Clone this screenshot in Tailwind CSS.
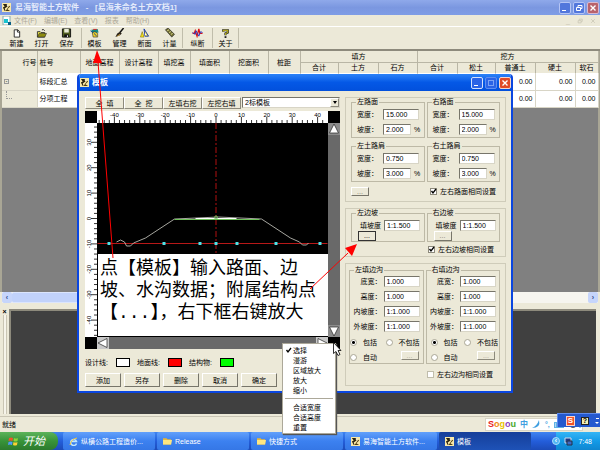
<!DOCTYPE html>
<html lang="zh-CN">
<head>
    <meta charset="UTF-8">
    <meta name="viewport" content="width=device-width, initial-scale=1">
    <title>易海智能土方软件</title>
    <script src="https://cdn.jsdelivr.net/npm/@tailwindcss/browser@4"></script>
</head>
<body class="relative h-screen overflow-hidden flex flex-col bg-[#ece9d8] text-black text-[7px] leading-[9px] font-['Liberation_Sans','Noto_Sans_CJK_SC',sans-serif] select-none">

<!-- shared icons -->
<svg class="hidden">
    <symbol id="app" viewBox="0 0 10 10">
        <rect width="10" height="10" fill="#f8e8a8"/>
        <path d="M1 1l2 3-2 1 2 4h1L3 6l3-2V1z" fill="#2b2410"/>
        <path d="M4 9l4-6 1 1-3 3 3 2z" fill="#4d3c12"/>
        <path d="M5 2l2-1-1 3z" fill="#fff"/>
    </symbol>
    <symbol id="folder" viewBox="0 0 10 8">
        <path d="M0 1h4l1 1h4v6H0z" fill="#e8b83a"/>
        <path d="M0 8V3h10L9 8z" fill="#ffe680"/>
    </symbol>
    <symbol id="tick" viewBox="0 0 7 7">
        <path d="M1.5 3l1.5 2 3-4" fill="none" stroke="#000" stroke-width="1.3"/>
    </symbol>
</svg>

<!-- main window title -->
<header class="flex items-center h-[15px] shrink-0 pl-0.5 pr-px gap-1 bg-linear-to-b from-[#8fa9ea] via-[#7b97e0] to-[#7f9de6] text-[#e4ebfb]">
    <svg class="size-[9px]"><use href="#app"/></svg>
    <h1 class="text-[8px] font-bold grow whitespace-pre">易海智能土方软件   -   [易海未命名土方文档1]</h1>
    <div class="flex gap-0.5">
        <button aria-label="最小化" class="size-3 rounded-xs border border-[#b5c5f5] bg-[#5277dc] flex items-end p-0.5"><span class="w-1 h-px bg-white"></span></button>
        <button aria-label="还原" class="size-3 rounded-xs border border-[#b5c5f5] bg-[#5277dc] grid place-items-center">
            <svg class="size-2" viewBox="0 0 8 8" fill="none" stroke="#fff"><path d="M3 3V1.500h4v3H5.500M1.500 3.500h4v3h-4z"/></svg>
        </button>
        <button aria-label="关闭" class="size-3 rounded-xs border border-[#d9b9cf] bg-[#b9636c] grid place-items-center">
            <svg class="size-2" viewBox="0 0 8 8" stroke="#fff" stroke-width="1.400"><path d="M1.500 1.500l5 5M6.500 1.500l-5 5"/></svg>
        </button>
    </div>
</header>

<!-- menu -->
<nav class="flex items-center h-3 shrink-0 pl-0.5 pr-1 gap-[7px] border-b border-white text-[#aca899]">
    <svg class="size-[9px] -mr-1" viewBox="0 0 9 9"><rect x="1" width="7" height="9" fill="#fff" stroke="#8aa"/><path d="M2 3h4v4H2z" fill="#1bc3cf"/><path d="M6 6h3v3H6z" fill="#0b5f86"/></svg>
    <button>文件(F)</button>
    <button>编辑(E)</button>
    <button>查看(V)</button>
    <button>报表</button>
    <button class="mr-auto">帮助(H)</button>
    <span class="text-[#c9c5b4]">_</span>
    <svg class="size-[6px]" viewBox="0 0 8 8" fill="none" stroke="#c9c5b4"><path d="M3 3V1.500h4v3H5.500M1.500 3.500h4v3h-4z"/></svg>
    <svg class="size-[6px]" viewBox="0 0 8 8" stroke="#c9c5b4"><path d="M1.500 1.500l5 5M6.500 1.500l-5 5"/></svg>
</nav>

<!-- toolbar -->
<div class="flex h-6 shrink-0 pl-1 py-px border-b-2 border-[#8d8a7c]">
    <button class="w-[25px] flex flex-col items-center gap-px">
        <svg class="size-[11px]" viewBox="0 0 11 11"><path d="M3 2h4l2 2v6H3z" fill="#fff" stroke="#222"/><path d="M6.500 2v2.500H9" fill="none" stroke="#222"/></svg>新建
    </button>
    <button class="w-[25px] flex flex-col items-center gap-px">
        <svg class="size-[11px]" viewBox="0 0 11 11"><path d="M1 4h3l1 1h4v5H1z" fill="#e9e04a" stroke="#333"/><path d="M1 10l2-4h8L9 10z" fill="#8d8b10" stroke="#222" stroke-width=".6"/><path d="M6 2q2-1 3 1" fill="none" stroke="#222"/></svg>打开
    </button>
    <button class="w-[25px] flex flex-col items-center gap-px">
        <svg class="size-[11px]" viewBox="0 0 11 11"><path d="M1 1h9v9H1z" fill="#4f5d1d" stroke="#111"/><path d="M3 1h5v4H3z" fill="#e9ecd8"/><path d="M3 7h5v3H3z" fill="#111"/><path d="M6 8h1v2H6z" fill="#fff"/></svg>保存
    </button>
    <div class="w-[3px] border-r border-[#c0bdab]"></div>
    <button class="w-[25px] flex flex-col items-center gap-px">
        <svg class="size-[11px]" viewBox="0 0 11 11"><path d="M2 2l7-1 1 4-7 1z" fill="#148a86"/><path d="M4 1h4v1H4z" fill="#d22"/><path d="M3 5l3-1 3 2v4H4z" fill="#f0d12c" stroke="#222" stroke-width=".6"/><path d="M5 6l3 3M1 3l3 2" stroke="#123e8c"/></svg>模板
    </button>
    <button class="w-[25px] flex flex-col items-center gap-px">
        <svg class="size-[11px]" viewBox="0 0 11 11"><path d="M10 0L6 5" stroke="#111" stroke-width="1.600"/><path d="M6 4l2 2-2 2-5 2 2-4z" fill="#2b2418"/><path d="M3 9l3-2" stroke="#d2a33a"/></svg>管理
    </button>
    <button class="w-[25px] flex flex-col items-center gap-px">
        <svg class="size-[11px]" viewBox="0 0 11 11"><path d="M1 10l2-6 2 6z" fill="#f4e21e" stroke="#776a00" stroke-width=".6"/><path d="M5 1l5 8H6z" fill="#f4e21e" stroke="#1433b0"/><path d="M6 5l2 3H6z" fill="#fff"/></svg>断面
    </button>
    <button class="w-[25px] flex flex-col items-center gap-px">
        <svg class="size-[11px]" viewBox="0 0 11 11"><path d="M1 2l3-2 7 7-3 3z" fill="#6e6b2f" stroke="#222" stroke-width=".7"/><path d="M3 3l2-1M5 5l2-1M7 7l2-1" stroke="#e9e6a0"/></svg>计量
    </button>
    <div class="w-px bg-[#c0bdab]"></div>
    <button class="w-[29px] flex flex-col items-center gap-px">
        <svg class="size-[11px]" viewBox="0 0 11 11" fill="none"><path d="M0 6h2l1-3 2 6 2-8 1 5h3" stroke="#d11" stroke-width="1.400"/><path d="M0 5l3 2 1-4 3 6 2-5 2 1" stroke="#2335c8"/></svg>纵断
    </button>
    <div class="w-px bg-[#c0bdab]"></div>
    <button class="w-[25px] flex flex-col items-center gap-px">
        <svg class="size-[11px]" viewBox="0 0 11 11" fill="none"><path d="M3 4V2.500h5V5L5.500 6v2" stroke="#222" stroke-width="2.400"/><path d="M3 4V2.500h5V5L5.500 6v1.500" stroke="#e6d81c"/><path d="M4.500 9h2v2h-2z" fill="#222"/></svg>关于
    </button>
    <div class="w-px bg-[#c0bdab]"></div>
</div>

<!-- quantity table -->
<main class="h-[241px] shrink-0 border-l-2 border-r-2 border-[#a9a695] bg-[#808080]">
    <table class="w-full table-fixed border-collapse">
        <colgroup>
            <col class="w-[35px]"><col class="w-[43px]"><col class="w-[39px]"><col class="w-[39px]"><col class="w-[32px]"><col class="w-[39px]"><col class="w-[39px]"><col class="w-[32px]">
            <col class="w-[38px]"><col class="w-[40px]"><col class="w-[39px]"><col class="w-[40px]"><col class="w-[38px]"><col class="w-[40px]"><col class="w-[40px]"><col class="w-[23px]">
        </colgroup>
        <thead class="bg-[#ece9d8] [&_th]:font-normal [&_th]:border-r [&_th]:border-[#b9b6a5] [&_th]:p-0">
            <tr class="h-[11px]">
                <th rowspan="2" class="text-right">行号</th>
                <th rowspan="2" class="text-left"><span class="pl-0.5">桩号</span></th>
                <th rowspan="2">地面高程</th>
                <th rowspan="2">设计高程</th>
                <th rowspan="2">填挖高</th>
                <th rowspan="2">填面积</th>
                <th rowspan="2">挖面积</th>
                <th rowspan="2">桩距</th>
                <th colspan="3" class="border-b">填方</th>
                <th colspan="5" class="border-b">挖方</th>
            </tr>
            <tr class="h-[11px]">
                <th>合计</th><th>土方</th><th>石方</th>
                <th>合计</th><th>松土</th><th>普通土</th><th>硬土</th><th>软石</th>
            </tr>
        </thead>
        <tbody class="bg-white text-right [&_td]:border-r [&_td]:border-b [&_td]:border-[#d8d5c6] [&_td]:p-0 [&_td]:pr-0.5">
            <tr class="h-[17px]">
                <td class="bg-[#ece9d8]"><span class="block size-[5px] ml-0.5 border border-[#999] text-[6px] leading-[3px] text-center">-</span></td>
                <td class="text-left"><span class="pl-0.5">标段汇总</span></td><td></td><td></td><td></td><td></td><td></td><td></td><td></td><td></td><td></td><td></td><td></td>
                <td>0.00</td><td>0.00</td><td>0.00</td>
            </tr>
            <tr class="h-[17px]">
                <td class="bg-[#ece9d8]"><span class="block w-1.5 h-2 ml-1 -mt-2 border-l border-b border-dotted border-[#999]"></span></td>
                <td class="text-left"><span class="pl-0.5">分项工程</span></td><td></td><td></td><td></td><td></td><td></td><td></td><td></td><td></td><td></td><td></td><td></td>
                <td>0.00</td><td>0.00</td><td>0.00</td>
            </tr>
        </tbody>
    </table>
</main>

<div class="flex h-[11px] shrink-0 mx-0.5 bg-[#f6f5ef]">
    <button aria-label="向左" class="w-2.5 rounded-xs bg-[#c6d5fb] text-[#2d4a8c] font-bold">‹</button>
    <div class="w-3/4 rounded-xs bg-[#c1d2fb] border-y border-[#dbe5fd]"></div>
    <button aria-label="向右" class="w-2.5 ml-auto rounded-xs bg-[#c6d5fb] text-[#2d4a8c] font-bold">›</button>
</div>

<!-- docked panel -->
<section class="flex grow min-h-0 pt-1.5 pr-1">
    <div class="w-[11px] flex flex-col items-center border-r-2 border-[#8d8a7c]">
        <button aria-label="关闭面板" class="font-bold leading-[6px]">×</button>
        <div class="w-1 grow border-x border-x-[#c9c5b4] bg-[#f6f4ea]"></div>
    </div>
    <div class="grow border-t-2 border-[#8d8a7c] bg-[#404040]"></div>
</section>

<footer class="flex items-center h-4 shrink-0 mt-0.5 px-0.5 border-t border-[#c9c5b4]">就绪</footer>

<!-- taskbar -->
<div class="flex items-stretch h-[18px] shrink-0 gap-0.5 bg-linear-to-b from-[#3f84f0] via-[#245edb] to-[#1c4bb8] text-white">
    <button class="flex items-center w-[58px] gap-1 pl-2 mr-[3px] rounded-r-lg bg-linear-to-b from-[#5cb35a] via-[#389439] to-[#2c7a2d] text-[11px] italic">
        <svg class="size-[11px]" viewBox="0 0 11 11"><path d="M1 2q2-1 4 0L4.500 5q-2-1-4 0z" fill="#f0542a"/><path d="M6 2q2 1 4 0l-.5 3q-2 1-4 0z" fill="#8cd438"/><path d="M.5 6q2-1 4 0L4 9q-2-1-4 0z" fill="#4f9bf7"/><path d="M5.500 6q2 1 4 0L9 9q-2 1-4 0z" fill="#fbd233"/></svg>开始
    </button>
    <button class="flex items-center w-[92px] gap-[3px] pl-1.5 rounded-xs bg-linear-to-b from-[#62a0fb] via-[#3c81f0] to-[#3577e6]">
        <svg class="size-[9px]" viewBox="0 0 9 9" fill="none"><path d="M7.500 6.500A3 3 0 1 1 7.500 4.500H3" stroke="#bfe6ff" stroke-width="1.500"/><path d="M1 8Q2 2 8 1" stroke="#f4c83c"/></svg>纵横公路工程造价...
    </button>
    <button class="flex items-center w-[92px] gap-[3px] pl-1.5 rounded-xs bg-linear-to-b from-[#62a0fb] via-[#3c81f0] to-[#3577e6]">
        <svg class="w-[9px] h-2"><use href="#folder"/></svg>Release
    </button>
    <button class="flex items-center w-[92px] gap-[3px] pl-1.5 rounded-xs bg-linear-to-b from-[#62a0fb] via-[#3c81f0] to-[#3577e6]">
        <svg class="w-[9px] h-2"><use href="#folder"/></svg>快捷方式
    </button>
    <button class="flex items-center w-[92px] gap-[3px] pl-1.5 rounded-xs bg-linear-to-b from-[#62a0fb] via-[#3c81f0] to-[#3577e6]">
        <svg class="size-[9px]"><use href="#app"/></svg>易海智能土方软件...
    </button>
    <button class="flex items-center w-[92px] gap-[3px] pl-1.5 rounded-xs bg-linear-to-b from-[#163f9a] to-[#1e52b7]">
        <svg class="size-[9px]"><use href="#app"/></svg>模板
    </button>
    <div class="flex items-center ml-auto w-11 gap-1 pr-2 bg-linear-to-b from-[#35b5f5] via-[#129be8] to-[#0f86d0]">
        <span class="size-2 -ml-1 rounded-full bg-[#4fb4f3] border border-[#a9dcfb] leading-[5px] text-center font-bold">‹</span>
        <svg class="size-[9px]" viewBox="0 0 9 9"><path d="M1 1h6v5H1z" fill="#203a8a" stroke="#cde"/><path d="M3 4h5v4H3z" fill="#3e67c4" stroke="#234"/></svg>
        <time class="ml-auto">7:48</time>
    </div>
</div>

<!-- input method bars -->
<div class="absolute right-[17px] bottom-[19px] flex items-center w-[98px] h-[13px] pl-0.5 gap-1 bg-white border border-[#d8d5c6] text-[#3f9fe0]">
    <b class="text-[9px]"><span class="text-[#e8241c]">S</span><span class="text-[#f08a10]">o</span><span class="text-[#e8c400]">g</span><span class="text-[#8b3fc0]">o</span><span class="text-[#48a82c]">u</span></b>
    <b class="text-[8px]">中</b>
    <svg class="size-[9px] shrink-0" viewBox="0 0 9 9"><path d="M7 0Q9 8 0 8q5-2 7-8z" fill="#3f9fe0"/></svg>
    <b>°,</b>
    <svg class="w-2.5 h-2 shrink-0" viewBox="0 0 10 8"><path d="M0 1h10v6H0z" fill="#5fb1e6"/><path d="M1 3h8M1 5h8" stroke="#fff" stroke-dasharray="1 1"/></svg>
    <svg class="w-[18px] h-2 shrink-0" viewBox="0 0 18 8"><circle cx="5" cy="4" r="3" fill="#555"/><path d="M12 1v6M10 3h5" stroke="#3f9fe0"/></svg>
</div>
<div class="absolute right-0 bottom-[23px] flex items-center w-[43px] h-3.5 pl-2 gap-1.5 bg-[#2459cf] border-t border-l border-[#5f8cec] text-white">
    <b class="w-[9px] h-2.5 bg-[#f0522a] border border-[#fbd5c8] text-[8px] leading-2 text-center">S</b>
    <b class="w-2 h-2 bg-[#f4eeb4] border border-[#222] leading-[6px] text-black text-center">?</b>
    <svg class="w-1 h-2" viewBox="0 0 4 8"><path d="M1 1h3v1H1zM0 5h4L2 7z" fill="#fff"/></svg>
</div>

<!-- template dialog -->
<div role="dialog" aria-labelledby="dlg-title" class="absolute left-[77px] top-[74px] w-[436px] h-[319px] flex flex-col rounded-t-[4px] border-2 border-t-0 border-[#0a46e0] bg-[#ece9d8] overflow-hidden">
    <div class="flex items-center h-[17px] shrink-0 gap-[3px] pl-px bg-linear-to-b from-[#2b82f8] via-[#0458e6] to-[#0250dc] text-white">
        <svg class="size-[9px]"><use href="#app"/></svg>
        <h2 id="dlg-title" class="text-[8px] font-bold grow">模板</h2>
        <div class="flex gap-0.5">
            <button aria-label="最小化" class="size-3 rounded-xs border border-[#d4e0fb] bg-[#2a63e6] flex items-end p-0.5"><span class="w-1 h-px bg-white"></span></button>
            <button aria-label="最大化" disabled class="size-3 rounded-xs border border-[#5d8df0] bg-[#2a63e6] grid place-items-center"><span class="size-1.5 border border-[#7ba2f4]"></span></button>
            <button aria-label="关闭" class="size-3 rounded-xs border border-[#f7d5cb] bg-[#e04a26] grid place-items-center">
                <svg class="size-2" viewBox="0 0 8 8" stroke="#fff" stroke-width="1.400"><path d="M1.500 1.500l5 5M6.500 1.500l-5 5"/></svg>
            </button>
        </div>
    </div>

    <div class="flex grow pt-1.5 pl-1.5 pr-[5px] gap-[5px]">
        <!-- drawing side -->
        <div class="grow min-w-0">
            <div class="flex h-3 mb-0.5">
                <button class="w-[39px] border border-t-white border-l-white border-r-[#8d8a7c] border-b-[#8d8a7c] whitespace-pre">全  填</button>
                <button class="w-[39px] border border-t-white border-l-white border-r-[#8d8a7c] border-b-[#8d8a7c] whitespace-pre">全  挖</button>
                <button class="w-[39px] border border-t-white border-l-white border-r-[#8d8a7c] border-b-[#8d8a7c]">左填右挖</button>
                <button class="w-[39px] border border-t-white border-l-white border-r-[#8d8a7c] border-b-[#8d8a7c]">左挖右填</button>
                <div class="relative grow ml-px">
                    <select aria-label="模板" class="block appearance-none w-full h-[11px] pl-0.5 bg-white border border-t-[#77756a] border-l-[#77756a] border-r-[#d8d5c6] border-b-[#d8d5c6] leading-[9px]">
                        <option>2标模板</option>
                    </select>
                    <span class="absolute right-px top-px w-[9px] h-[9px] bg-[#ece9d8] border border-t-white border-l-white border-r-[#8d8a7c] border-b-[#8d8a7c] grid place-items-center pointer-events-none">
                        <svg class="w-1 h-[3px]" viewBox="0 0 4 3"><path d="M0 0h4L2 3z"/></svg>
                    </span>
                </div>
            </div>

            <div class="grid grid-cols-[12px_1fr_12px] grid-rows-[12px_131px_83px_12px] bg-black">
                <div></div>
                <svg id="ruler-x" class="w-full h-3 bg-white" viewBox="0 0 230 12"></svg>
                <div></div>

                <svg id="ruler-y" class="row-span-2 w-3 h-[214px] bg-white" viewBox="0 0 12 214"></svg>
                <svg class="w-full h-[131px]" viewBox="0 0 230 131" fill="none">
                    <path d="M118.500 0v131" stroke="#b01010" stroke-dasharray="6 2 2 2"/>
                    <path d="M0 120.500h230" stroke="#b81818"/>
                    <path d="M19 119l4-2 4 2 2 4 4 0 3-3 12-5 29-19 44-2 43 2 29 19 9 4 3 3 4 0 2-2" stroke="#d0d0c8" stroke-width=".8"/>
                    <path d="M77 96.500h85" stroke="#6fc25a"/>
                    <path d="M98 95.500h41" stroke="#fff"/>
                    <circle cx="118.500" cy="94.500" r="1.500" stroke="#6fc25a"/>
                    <path d="M10 120.500h3M65 120.500h3M101 120.500h3M117 120.500h3M138 120.500h3M177 120.500h3M221 120.500h3" stroke="#4fe3e8" stroke-width="3"/>
                </svg>
                <div class="row-span-2 flex flex-col justify-between bg-[#696969]">
                    <button aria-label="上移" class="h-3 bg-[#8c8c8c]"><svg class="size-3" viewBox="0 0 12 12"><path d="M6 1l4.500 9h-9z" fill="#fff" stroke="#222" stroke-width=".7"/></svg></button>
                    <button aria-label="下移" class="h-3 bg-[#8c8c8c]"><svg class="size-3" viewBox="0 0 12 12"><path d="M6 11l4.500-9h-9z" fill="#fff" stroke="#222" stroke-width=".7"/></svg></button>
                </div>

                <p class="ml-px mb-px pl-0.5 pt-1 bg-white text-[18px] leading-[22px] whitespace-nowrap overflow-hidden font-['Liberation_Mono','Noto_Sans_CJK_SC',monospace]">点【模板】输入路面、边<br>坡、水沟数据；附属结构点<br>【...】，右下框右键放大</p>

                <div></div>
                <div class="flex justify-between bg-[#696969]">
                    <button aria-label="左移" class="w-3 bg-[#c9c9c9]"><svg class="size-3" viewBox="0 0 12 12"><path d="M1 6l9-4.500v9z" fill="#fff" stroke="#222" stroke-width=".7"/></svg></button>
                    <button aria-label="右移" class="w-3 bg-[#c9c9c9]"><svg class="size-3" viewBox="0 0 12 12"><path d="M11 6L2 1.500v9z" fill="#fff" stroke="#222" stroke-width=".7"/></svg></button>
                </div>
            </div>

            <div class="flex items-center h-[9px] mt-[9px] gap-[7px]">
                <div class="flex items-center w-[45px] justify-between">设计线:<span class="w-3.5 h-[9px] border border-black bg-white"></span></div>
                <div class="flex items-center w-[45px] justify-between">地面线:<span class="w-3.5 h-[9px] border border-black bg-[#ff0000]"></span></div>
                <div class="flex items-center w-[45px] justify-between">结构物:<span class="w-3.5 h-[9px] border border-black bg-[#00ff00]"></span></div>
            </div>
            <div class="flex h-3.5 mt-1.5 gap-[3px]">
                <button class="w-9 border border-t-white border-l-white border-r-[#77756a] border-b-[#77756a]">添加</button>
                <button class="w-9 border border-t-white border-l-white border-r-[#77756a] border-b-[#77756a]">另存</button>
                <button class="w-9 border border-t-white border-l-white border-r-[#77756a] border-b-[#77756a]">删除</button>
                <button class="w-9 border border-t-white border-l-white border-r-[#77756a] border-b-[#77756a]">取消</button>
                <button class="w-9 border border-t-white border-l-white border-r-[#77756a] border-b-[#77756a]">确定</button>
            </div>
        </div>

        <!-- settings side -->
        <form class="w-[161px] shrink-0 flex flex-col gap-1.5 [&_fieldset]:border [&_fieldset]:border-[#bdb9a6] [&_legend]:ml-1 [&_legend]:px-px [&_legend]:leading-2 [&_input[type=text]]:h-[11px] [&_input[type=text]]:pl-0.5 [&_input[type=text]]:bg-white [&_input[type=text]]:border [&_input[type=text]]:border-t-[#77756a] [&_input[type=text]]:border-l-[#77756a] [&_input[type=text]]:border-r-[#d8d5c6] [&_input[type=text]]:border-b-[#d8d5c6]">
            <div class="h-[105px] px-[5px] border border-[#cfccba]">
                <div class="grid grid-cols-2 gap-x-0.5 gap-y-1">
                    <fieldset>
                        <legend>左路面</legend>
                        <div class="pt-px pl-[5px]">
                            <div class="flex items-center h-[15px]"><label for="lw" class="w-[26px]">宽度：</label><input id="lw" type="text" value="15.000" class="w-9"></div>
                            <div class="flex items-center h-[15px]"><label for="ls" class="w-[26px]">坡度：</label><input id="ls" type="text" value="2.000" class="w-7"><span class="pl-[3px]">%</span></div>
                        </div>
                    </fieldset>
                    <fieldset>
                        <legend>右路面</legend>
                        <div class="pt-px pl-[5px]">
                            <div class="flex items-center h-[15px]"><label for="rw" class="w-[26px]">宽度：</label><input id="rw" type="text" value="15.000" class="w-9"></div>
                            <div class="flex items-center h-[15px]"><label for="rs" class="w-[26px]">坡度：</label><input id="rs" type="text" value="2.000" class="w-7"><span class="pl-[3px]">%</span></div>
                        </div>
                    </fieldset>
                    <fieldset>
                        <legend>左土路肩</legend>
                        <div class="pt-px pl-[5px]">
                            <div class="flex items-center h-[15px]"><label for="lsw" class="w-[26px]">宽度：</label><input id="lsw" type="text" value="0.750" class="w-9"></div>
                            <div class="flex items-center h-[15px]"><label for="lss" class="w-[26px]">坡度：</label><input id="lss" type="text" value="3.000" class="w-7"><span class="pl-[3px]">%</span></div>
                        </div>
                    </fieldset>
                    <fieldset>
                        <legend>右土路肩</legend>
                        <div class="pt-px pl-[5px]">
                            <div class="flex items-center h-[15px]"><label for="rsw" class="w-[26px]">宽度：</label><input id="rsw" type="text" value="0.750" class="w-9"></div>
                            <div class="flex items-center h-[15px]"><label for="rss" class="w-[26px]">坡度：</label><input id="rss" type="text" value="3.000" class="w-7"><span class="pl-[3px]">%</span></div>
                        </div>
                    </fieldset>
                </div>
                <div class="flex items-center justify-between h-[18px] pr-1">
                    <button type="button" class="w-[18px] h-[9px] leading-[5px] border border-t-white border-l-white border-r-[#77756a] border-b-[#77756a] text-[#77756a]">...</button>
                    <label class="relative flex items-center gap-[3px]">
                        <input type="checkbox" checked class="peer appearance-none size-[7px] bg-white border border-[#8d8a7c]">
                        <svg class="hidden peer-checked:block absolute left-0 size-[7px]"><use href="#tick"/></svg>左右路面相同设置
                    </label>
                </div>
            </div>

            <div class="h-[49px] px-[5px] border border-[#cfccba]">
                <div class="grid grid-cols-2 gap-x-0.5">
                    <fieldset>
                        <legend>左边坡</legend>
                        <div class="pt-0.5 pl-1.5">
                            <div class="flex items-center h-3"><label for="lb" class="w-[26px] pl-0.5">填坡度</label><input id="lb" type="text" value="1:1.500" class="w-9"></div>
                            <button type="button" class="block w-[18px] h-2.5 leading-1.5 border border-[#333]">...</button>
                        </div>
                    </fieldset>
                    <fieldset>
                        <legend>右边坡</legend>
                        <div class="pt-0.5 pl-1.5">
                            <div class="flex items-center h-3"><label for="rb" class="w-[26px] pl-0.5">填坡度</label><input id="rb" type="text" value="1:1.500" class="w-9"></div>
                            <button type="button" class="block w-[18px] h-2.5 leading-1.5 border border-t-white border-l-white border-r-[#77756a] border-b-[#77756a] text-[#77756a]">...</button>
                        </div>
                    </fieldset>
                </div>
                <div class="flex items-center justify-end h-3.5 pr-1.5">
                    <label class="relative flex items-center gap-[3px]">
                        <input type="checkbox" checked class="peer appearance-none size-[7px] bg-white border border-[#8d8a7c]">
                        <svg class="hidden peer-checked:block absolute left-0 size-[7px]"><use href="#tick"/></svg>左右边坡相同设置
                    </label>
                </div>
            </div>

            <div class="h-[123px] pt-0.5 pl-[3px] pr-[5px] border border-[#cfccba] [&_input[type=radio]]:appearance-none [&_input[type=radio]]:size-[7px] [&_input[type=radio]]:rounded-full [&_input[type=radio]]:border [&_input[type=radio]]:border-[#a9a695] [&_input[type=radio]]:bg-white [&_input[type=radio]:checked]:bg-[radial-gradient(#000_1px,#fff_2px)]">
                <div class="grid grid-cols-2 gap-x-0.5">
                    <fieldset>
                        <legend>左填边沟</legend>
                        <div>
                            <div class="flex items-center justify-end h-[15px] pr-[3px]"><label for="l1">底宽：</label><input id="l1" type="text" value="1.000" class="w-9 ml-0.5"></div>
                            <div class="flex items-center justify-end h-[15px] pr-[3px]"><label for="l2">高度：</label><input id="l2" type="text" value="1.000" class="w-9 ml-0.5"></div>
                            <div class="flex items-center justify-end h-[15px] pr-[3px]"><label for="l3">内坡度：</label><input id="l3" type="text" value="1:1.000" class="w-9 ml-0.5"></div>
                            <div class="flex items-center justify-end h-[15px] pr-[3px]"><label for="l4">外坡度：</label><input id="l4" type="text" value="1:1.000" class="w-9 ml-0.5"></div>
                            <div class="flex items-center justify-between h-[17px] pr-[3px]">
                                <label class="flex items-center gap-1.5"><input type="radio" name="left" checked>包括</label>
                                <label class="flex items-center gap-1.5"><input type="radio" name="left">不包括</label>
                            </div>
                            <div class="flex items-center justify-between h-3 pr-1">
                                <label class="flex items-center gap-1.5"><input type="radio" name="left">自动</label>
                                <button type="button" class="w-[18px] h-[9px] mb-1 leading-[5px] border border-t-white border-l-white border-r-[#8d8a7c] border-b-[#8d8a7c] text-[#aca899]">...</button>
                            </div>
                        </div>
                    </fieldset>
                    <fieldset>
                        <legend>右填边沟</legend>
                        <div>
                            <div class="flex items-center justify-end h-[15px] pr-[3px]"><label for="r1">底宽：</label><input id="r1" type="text" value="1.000" class="w-9 ml-0.5"></div>
                            <div class="flex items-center justify-end h-[15px] pr-[3px]"><label for="r2">高度：</label><input id="r2" type="text" value="1.000" class="w-9 ml-0.5"></div>
                            <div class="flex items-center justify-end h-[15px] pr-[3px]"><label for="r3">内坡度：</label><input id="r3" type="text" value="1:1.000" class="w-9 ml-0.5"></div>
                            <div class="flex items-center justify-end h-[15px] pr-[3px]"><label for="r4">外坡度：</label><input id="r4" type="text" value="1:1.000" class="w-9 ml-0.5"></div>
                            <div class="flex items-center justify-between h-[17px] pl-1 pr-px">
                                <label class="flex items-center gap-1.5"><input type="radio" name="right" checked>包括</label>
                                <label class="flex items-center gap-1.5"><input type="radio" name="right">不包括</label>
                            </div>
                            <div class="flex items-center justify-between h-3 pl-1 pr-1">
                                <label class="flex items-center gap-1.5"><input type="radio" name="right">自动</label>
                                <button type="button" class="w-[18px] h-[9px] mb-1 leading-[5px] border border-t-white border-l-white border-r-[#8d8a7c] border-b-[#8d8a7c] text-[#aca899]">...</button>
                            </div>
                        </div>
                    </fieldset>
                </div>
                <div class="flex items-center justify-end h-5 pr-[7px]">
                    <label class="relative flex items-center gap-[3px]">
                        <input type="checkbox" class="peer appearance-none size-[7px] bg-white border border-[#c0bdab]">
                        <svg class="hidden peer-checked:block absolute left-0 size-[7px]"><use href="#tick"/></svg>左右边沟相同设置
                    </label>
                </div>
            </div>
        </form>
    </div>
</div>

<!-- context menu -->
<ul role="menu" class="absolute left-[282px] top-[343px] w-[54px] py-px bg-white border border-[#aca899] shadow-[1px_1px_1px_#555] [&_button]:block [&_button]:pl-2.5 [&_button]:h-2.5">
    <li class="relative"><svg class="absolute left-0.5 top-0.5 size-[7px]"><use href="#tick"/></svg><button role="menuitem">选择</button></li>
    <li><button role="menuitem">漫游</button></li>
    <li><button role="menuitem">区域放大</button></li>
    <li><button role="menuitem">放大</button></li>
    <li><button role="menuitem">缩小</button></li>
    <li class="h-px mx-0.5 my-[3px] bg-[#aca899]"></li>
    <li><button role="menuitem">合适宽度</button></li>
    <li><button role="menuitem">合适高度</button></li>
    <li><button role="menuitem">重置</button></li>
</ul>

<!-- callout arrows and mouse pointer -->
<svg class="absolute left-0 top-0 w-[600px] h-[450px] pointer-events-none" viewBox="0 0 600 450">
    <path d="M98 62L113 258M310 289L348 253" stroke="#f00" fill="none"/>
    <path d="M97 50l5 13h-9zM357 244l-5 12-7-8z" fill="#f00"/>
    <path d="M333.500 342.500v11l2.500-2 2 4 2-1-2-4h3z" fill="#fff" stroke="#000" stroke-width=".8"/>
</svg>

<script>
    // ruler scale: 10 m is 25.4 px, both axes
    const STEP = 25.4;

    function drawRuler(id, origin, length, vertical) {
        let out = '';
        for (let i = -50; i <= 50; i++) {
            const pos = origin + i * STEP / 5;
            if (pos < 1 || pos > length - 1) continue;
            const major = i % 5 === 0;
            const from = major ? 6 : 9;
            out += vertical
                ? `<path d="M${from} ${pos}H12" stroke="#000" stroke-width=".8"/>`
                : `<path d="M${pos} ${from}V12" stroke="#000" stroke-width=".8"/>`;
            if (major && pos > 8 && pos < length - 8) {
                const value = (vertical ? -i : i) * 2;
                out += vertical
                    ? `<text font-size="6" text-anchor="middle" transform="translate(6 ${pos}) rotate(-90)">${value}</text>`
                    : `<text font-size="6" text-anchor="middle" x="${pos}" y="6">${value}</text>`;
            }
        }
        document.getElementById(id).innerHTML = out;
    }

    drawRuler('ruler-x', 118.5, 230, false);
    drawRuler('ruler-y', 95.5, 214, true);
</script>
</body>
</html>
